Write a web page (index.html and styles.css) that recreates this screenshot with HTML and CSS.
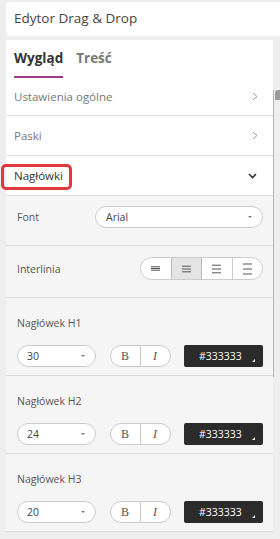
FILE: index.html
```html
<!DOCTYPE html>
<html lang="pl">
<head>
    <meta charset="UTF-8">
    <meta name="viewport" content="width=device-width, initial-scale=1.0">
    <title>Edytor Drag &amp; Drop</title>
    <link rel="stylesheet" href="styles.css">
</head>
<body>
    <div class="title">Edytor Drag &amp; Drop</div>

    <div class="wrap">
        <div class="panel">
            <div class="tabs">
                <span class="tab active">Wygląd</span>
                <span class="tab">Treść</span>
            </div>

            <div class="row first">
                <span>Ustawienia ogólne</span>
                <svg class="chev" width="6" height="9" viewBox="0 0 6 9"><polyline points="1,1 5,4.5 1,8" fill="none" stroke="#999" stroke-width="1"/></svg>
            </div>
            <div class="row">
                <span>Paski</span>
                <svg class="chev" width="6" height="9" viewBox="0 0 6 9"><polyline points="1,1 5,4.5 1,8" fill="none" stroke="#999" stroke-width="1"/></svg>
            </div>
            <div class="row open">
                <span>Nagłówki</span>
                <svg class="chev-down" width="9" height="6" viewBox="0 0 9 6"><polyline points="1,1 4.5,4.5 8,1" fill="none" stroke="#333" stroke-width="1.6"/></svg>
                <div class="highlight"></div>
            </div>

            <div class="settings">
                <div class="line font-line">
                    <span class="label">Font</span>
                    <div class="select wide">Arial <i class="caret"></i></div>
                </div>
                <div class="line">
                    <span class="label">Interlinia</span>
                    <div class="btn-group">
                        <span class="btn"><svg width="9" height="7" viewBox="0 0 9 7"><path d="M0 1.8h9M0 3.5h9M0 5.2h9" stroke="#555" stroke-width="1"/></svg></span>
                        <span class="btn active"><svg width="9" height="8" viewBox="0 0 9 8"><path d="M0 1.2h9M0 4h9M0 6.8h9" stroke="#555" stroke-width="1"/></svg></span>
                        <span class="btn"><svg width="9" height="10" viewBox="0 0 9 10"><path d="M0 1.2h9M0 5h9M0 8.8h9" stroke="#555" stroke-width="1"/></svg></span>
                        <span class="btn"><svg width="9" height="12" viewBox="0 0 9 12"><path d="M0 1h9M0 6h9M0 11h9" stroke="#555" stroke-width="1"/></svg></span>
                    </div>
                </div>

                <div class="heading">
                    <div class="label">Nagłówek H1</div>
                    <div class="controls">
                        <div class="select small">30 <i class="caret"></i></div>
                        <div class="style-group"><span class="b">B</span><span class="i">I</span></div>
                        <div class="color">#333333 <i class="corner"></i></div>
                    </div>
                </div>
                <div class="heading">
                    <div class="label">Nagłówek H2</div>
                    <div class="controls">
                        <div class="select small">24 <i class="caret"></i></div>
                        <div class="style-group"><span class="b">B</span><span class="i">I</span></div>
                        <div class="color">#333333 <i class="corner"></i></div>
                    </div>
                </div>
                <div class="heading">
                    <div class="label">Nagłówek H3</div>
                    <div class="controls">
                        <div class="select small">20 <i class="caret"></i></div>
                        <div class="style-group"><span class="b">B</span><span class="i">I</span></div>
                        <div class="color">#333333 <i class="corner"></i></div>
                    </div>
                </div>
            </div>
        </div>

        <div class="side">
            <div class="peek">
                <div class="peek-tab"></div>
            </div>
        </div>
    </div>
</body>
</html>
```

FILE: styles.css
```css
body {
    font-family: 'Open Sans', sans-serif;
    margin: 0;
    background-color: #eeeeee;
    color: #333333;
}
.title {
    margin: 2px 0 0 6px;
    height: 34px;
    line-height: 33px;
    padding-left: 8px;
    background-color: #ffffff;
    border-radius: 4px 0 0 4px;
    font-size: 13.5px;
    color: #444;
}
.wrap {
    display: flex;
    margin-top: 4px;
}
.panel {
    width: 267px;
    margin-left: 6px;
    background-color: #ffffff;
    flex: 0 0 auto;
}
.side {
    flex: 1;
}
.peek {
    margin-top: 50px;
    height: 287px;
    border-left: 1px solid #b5b5b5;
}
.peek-tab {
    width: 6px;
    height: 10px;
    margin-left: 1px;
    background-color: #9a9a9a;
    border-radius: 3px 0 0 0;
}
.tabs {
    display: flex;
    gap: 13px;
    padding: 0 0 0 8px;
    height: 38px;
}
.tab {
    font-weight: bold;
    font-size: 13.5px;
    color: #777;
    line-height: 36px;
}
.tab.active {
    color: #333;
    border-bottom: 2px solid #a03a90;
}
.row {
    position: relative;
    display: flex;
    justify-content: space-between;
    align-items: center;
    height: 39px;
    padding: 0 15px 0 8px;
    border-bottom: 1px solid #dddddd;
    font-size: 11.5px;
    color: #777;
}
.row.first {
    height: 37px;
}
.row.open {
    color: #333;
    padding-right: 16px;
}
.highlight {
    position: absolute;
    left: -5px;
    top: 8px;
    width: 65px;
    height: 20px;
    border: 3px solid #e0383d;
    border-radius: 5px;
}
.settings {
    background-color: #f5f5f5;
}
.line {
    display: flex;
    justify-content: space-between;
    align-items: center;
    height: 23px;
    padding: 11px 10px 17px 11px;
    border-bottom: 1px solid #dddddd;
}
.line.font-line {
    height: 22px;
    padding-top: 10px;
}
.label {
    font-size: 10.5px;
    color: #555;
}
.select {
    position: relative;
    box-sizing: border-box;
    height: 22px;
    line-height: 20px;
    background-color: #ffffff;
    border: 1px solid #cccccc;
    border-radius: 11px;
    font-size: 10.5px;
    color: #444;
    padding-left: 10px;
}
.select.wide {
    width: 168px;
}
.select.small {
    width: 79px;
    padding-left: 9px;
}
.caret {
    position: absolute;
    right: 10px;
    top: 9px;
    width: 0;
    height: 0;
    border-left: 2px solid transparent;
    border-right: 2px solid transparent;
    border-top: 2px solid #777;
}
.btn-group {
    display: flex;
    box-sizing: border-box;
    width: 123px;
    height: 23px;
    border: 1px solid #cccccc;
    border-radius: 12px;
    overflow: hidden;
    background-color: #ffffff;
}
.btn {
    flex: 1;
    display: flex;
    align-items: center;
    justify-content: center;
    border-left: 1px solid #cccccc;
}
.btn:first-child {
    border-left: none;
}
.btn.active {
    background-color: #e4e4e4;
    border-right: 1px solid #bbbbbb;
    border-left-color: #bbbbbb;
}
.btn.active + .btn {
    border-left: none;
}
.heading {
    padding: 16px 10px 8px 11px;
    border-bottom: 1px solid #dddddd;
}
.heading .label {
    line-height: 18px;
}
.controls {
    display: flex;
    align-items: center;
    justify-content: space-between;
    margin-top: 13px;
}
.style-group {
    display: flex;
    box-sizing: border-box;
    width: 61px;
    height: 22px;
    border: 1px solid #cccccc;
    border-radius: 11px;
    background-color: #ffffff;
    overflow: hidden;
    font-family: 'Liberation Serif', serif;
    font-size: 12px;
    color: #555;
}
.style-group span {
    flex: 1;
    text-align: center;
    line-height: 20px;
}
.style-group .i {
    font-style: italic;
    border-left: 1px solid #cccccc;
}
.color {
    position: relative;
    box-sizing: border-box;
    width: 79px;
    height: 22px;
    line-height: 22px;
    background-color: #2b2b2b;
    border-radius: 2px;
    color: #ffffff;
    font-size: 10.5px;
    padding-left: 15px;
}
.corner {
    position: absolute;
    right: 8px;
    bottom: 5px;
    width: 0;
    height: 0;
    border-left: 3px solid transparent;
    border-bottom: 3px solid #ffffff;
}
```
